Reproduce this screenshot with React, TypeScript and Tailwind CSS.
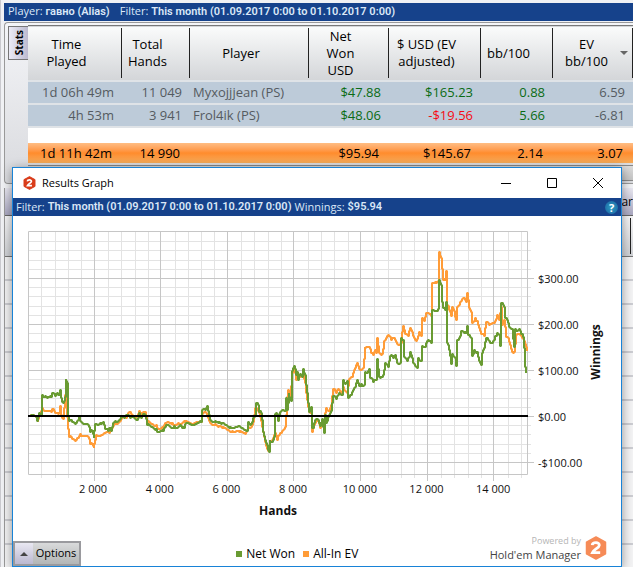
import React from "react";

type Point = [number, number];

const netWon: Point[] = [
  [28, 416], [36, 417], [37, 421], [39, 413], [41, 415], [42, 395], [45, 396], [47, 398], [51, 397], [52, 393], [55, 396],
  [57, 393], [59, 395], [60, 390], [61, 398], [63, 403], [65, 397], [65.5, 379], [67, 383], [68, 416], [69, 421], [72, 422],
  [75, 424], [77, 421], [79, 417], [81, 422], [85, 424], [88, 425], [90, 432], [92, 431], [93.5, 438], [95, 424], [100, 423],
  [103, 422], [105, 429], [108, 431], [110, 428], [111, 431], [112.5, 423], [115, 421], [119, 420], [121, 416], [124, 418],
  [126, 415], [130, 418], [133, 416], [137, 420], [139, 413], [141, 418], [143, 414], [145, 415], [147, 425], [152, 427],
  [156, 429], [157.5, 432], [163, 431], [165, 427], [168, 425], [172, 428], [174, 426], [177, 428], [180, 425], [182, 428],
  [184, 428], [186, 423], [190, 424], [197, 423], [201, 422], [202, 410], [205, 410], [207, 406], [208, 411], [209, 415],
  [210, 420], [215, 421], [218, 423], [221, 424], [225, 425], [230, 427], [236, 427], [241, 428], [244, 430], [247, 431],
  [248, 422], [251, 424], [253, 418], [255, 415], [256, 403], [258, 405], [259, 412], [261, 413], [262.5, 428], [265, 440],
  [267, 445], [268.5, 452], [269.5, 440], [272, 442], [274, 437], [274.5, 415], [277, 414], [278, 421], [280, 412],
  [283, 410], [285, 411], [286, 398], [287, 410], [288.5, 393], [291, 401], [292, 371], [294, 366], [296, 375], [297, 372],
  [298, 380], [300, 374], [302, 377], [303, 369], [305, 375], [306, 385], [307, 393], [308, 403], [309, 412], [311, 407],
  [312, 428], [313, 428], [315, 420], [318, 420], [320, 426], [322, 419], [324, 433], [325, 415], [326, 423], [328, 417],
  [331, 411], [333, 396], [336, 399], [339, 393], [342, 395], [343, 380], [345, 384], [347, 381], [348, 398], [351, 395],
  [355, 387], [357, 380], [359, 386], [361, 384], [364, 385], [365, 372], [367, 373], [369, 369], [370, 378], [373, 382],
  [376, 380], [377, 359], [379, 377], [383, 375], [385, 363], [388, 367], [390, 356], [393, 358], [395, 355], [397, 363],
  [400, 363], [401, 338], [403, 340], [404, 357], [407, 361], [409, 357], [410, 352], [413, 363], [417, 368], [418, 358],
  [421, 361], [422, 346], [425, 347], [427, 341], [431, 343], [432, 310], [435, 311], [438, 309], [439, 280], [441, 285],
  [442, 302], [443, 308], [445, 310], [446, 302], [447, 343], [449, 350], [451, 364], [452, 354], [455, 358], [456, 366],
  [457, 340], [460, 336], [461, 331], [464, 333], [466, 333], [467, 326], [468, 335], [471, 338], [472, 356], [474, 350],
  [477, 352], [479, 361], [481, 365], [482, 353], [484, 348], [486, 338], [490, 343], [493, 341], [495, 336], [497, 333],
  [499, 335], [500, 346], [501, 303], [504, 307], [505, 318], [507, 320], [509, 327], [512, 329], [514, 347], [515, 329],
  [517, 331], [519, 329], [521, 334], [523, 337], [524.5, 362], [526, 373],
];

const allInEv: Point[] = [
  [28, 416], [36, 417], [37.5, 422], [39, 415], [42, 408], [46, 411], [51, 412], [52, 409], [55, 413], [59, 413], [60, 406],
  [61, 415], [63, 419], [64.5, 395], [66, 395], [67, 417], [68, 429], [69, 437], [72, 439], [75, 441], [77, 438], [80, 434],
  [83, 436], [88, 437], [90, 444], [92, 444], [93.5, 448], [95, 440], [96, 435], [101, 435], [105, 433], [109, 433],
  [112, 428], [114, 423], [119, 422], [122, 417], [126, 418], [129, 412], [132, 415], [136, 417], [139, 411], [141, 414],
  [145, 412], [147, 422], [152, 424], [156, 425], [158, 429], [163, 428], [166, 423], [172, 423], [175, 425], [178, 423],
  [180, 425], [185, 422], [190, 423], [196, 422], [201, 422], [202, 414], [206, 413], [208, 418], [210, 423], [215, 424],
  [218, 427], [222, 428], [226, 429], [232, 431], [239, 432], [245, 434], [248, 427], [251, 427], [253, 422], [255, 408],
  [257, 410], [260, 417], [262, 427], [265, 442], [268, 451], [270, 442], [273, 438], [275, 433], [277, 440], [279, 435],
  [281, 433], [283, 430], [285, 427], [286, 415], [287, 397], [288, 390], [290, 398], [292, 373], [294, 368], [296, 380],
  [300, 377], [303, 373], [305, 383], [307, 400], [309, 412], [311, 413], [312, 432], [315, 423], [318, 421], [320, 428],
  [323, 422], [324.5, 415], [326, 408], [329, 411], [331, 405], [333, 389], [336, 393], [338, 389], [341, 393], [343, 387],
  [347, 393], [349, 379], [352, 377], [355, 368], [357, 363], [359, 369], [363, 368], [364.5, 347], [369, 347], [371, 353],
  [373, 355], [375, 350], [376, 353], [377, 338], [379, 353], [382, 354], [384, 341], [388, 335], [391, 340], [394, 338],
  [397, 344], [401, 343], [402, 332], [403, 326], [405, 334], [408, 336], [410, 328], [413, 336], [416, 341], [419, 332],
  [421, 336], [422, 318], [424, 321], [426, 313], [431, 316], [432, 283], [435, 282], [438, 281], [439, 252], [441, 258],
  [443, 280], [445, 280], [446, 271], [447, 305], [449, 310], [451, 316], [452, 307], [454, 311], [456, 320], [457, 307],
  [460, 302], [463, 298], [466, 302], [467, 293], [469, 308], [471, 312], [472, 323], [475, 318], [477, 321], [479, 328],
  [481, 334], [484, 336], [486, 322], [489, 325], [492, 323], [495, 321], [497, 315], [499, 320], [501, 307], [502, 325],
  [504, 320], [505.5, 337], [508, 338], [510, 345], [512, 352], [514, 352], [515.5, 334], [519, 334], [522, 338],
  [525, 344], [526.5, 351],
];

function tracePath(points: Point[]) {
  let d = `M${points[0][0]} ${points[0][1]}`;
  for (let i = 1; i < points.length; i++) {
    const [x0, y0] = points[i - 1];
    const [x1, y1] = points[i];
    const n = Math.max(1, Math.round(x1 - x0));
    for (let k = 1; k <= n; k++) {
      const swing = k < n ? Math.sin((x0 + k) * 12.9) * 1.2 : 0;
      const x = x0 + ((x1 - x0) * k) / n;
      const y = y0 + ((y1 - y0) * k) / n + swing;
      d += `H${Math.round(x)}V${Math.round(y)}`;
    }
  }
  return d;
}

const winningsTicks: [string, number][] = [
  ["$300.00", 278.5],
  ["$200.00", 324.5],
  ["$100.00", 370.5],
  ["$0.00", 416.5],
  ["-$100.00", 462.5],
];
const handsTicks = ["2 000", "4 000", "6 000", "8 000", "10 000", "12 000", "14 000"];
const minorX = Array.from({ length: 37 }, (_, i) => i + 1).filter((i) => i % 5 !== 0);
const minorY = Array.from({ length: 25 }, (_, i) => i - 4).filter((i) => i % 5 !== 0 && i <= 20);

function Chart() {
  return (
    <svg viewBox="0 0 608 310" className="block w-full" role="img" aria-label="Winnings by hands played">
      <g transform="translate(-13 -216)" fontSize="12" fill="#111">
        <g stroke="#e3e3e3" fill="none">
          {minorX.map((i) => {
            const x = Math.round(28 + i * 13.32) + 0.5;
            return <path key={i} d={`M${x} 231V478`} />;
          })}
          {minorY.map((i) => {
            const y = Math.round(278 + i * 9.2) + 0.5;
            return <path key={i} d={`M28 ${y}H531`} />;
          })}
        </g>
        <g stroke="#c6c6c6" fill="none">
          {handsTicks.map((label, i) => {
            const x = Math.round(28 + (i + 1) * 66.6) - 0.5;
            return <path key={label} d={`M${x} 231V481`} />;
          })}
          {winningsTicks.map(([label, y]) => (
            <path key={label} d={`M28 ${y}H534`} />
          ))}
          <path d="M28.5 231.5H527.5V474.5H28.5Z" />
        </g>
        <path d={tracePath(allInEv)} fill="none" stroke="#ff9c38" strokeWidth="2" strokeLinejoin="bevel" />
        <path d={tracePath(netWon)} fill="none" stroke="#699b32" strokeWidth="2" strokeLinejoin="bevel" />
        <path d="M28 416H528" stroke="#000" strokeWidth="2" />
        {winningsTicks.map(([label, y]) => (
          <text key={label} x="538" y={y + 4.5} fontSize="11">{label}</text>
        ))}
        {handsTicks.map((label, i) => (
          <text key={label} x={93 + i * 66.7} y="493" textAnchor="middle" fontSize="11">{label}</text>
        ))}
        <text x="278" y="515" textAnchor="middle" fontWeight="700">Hands</text>
        <text transform="translate(600 352) rotate(-90)" textAnchor="middle" fontWeight="700">Winnings</text>
      </g>
    </svg>
  );
}

function Logo({ className, color }: { className: string; color: string }) {
  return (
    <svg viewBox="0 0 22 24" className={className} aria-hidden="true">
      <path d="M11 1 20.500 6.200V17.800L11 23 1.500 17.800V6.200Z" fill={color} stroke={color} strokeWidth="1.500" strokeLinejoin="round" />
      <path d="M7.200 9.200C7.600 5.800 14.700 5.900 14.300 9.300C14 12 9.200 13 7.500 16.600H15.200" fill="none" stroke="#fff" strokeWidth="2.800" />
    </svg>
  );
}

const columns = [
  { name: "Time Played", width: "w-14" },
  { name: "Total Hands", width: "w-10" },
  { name: "Player", width: "w-14" },
  { name: "Net Won USD", width: "w-10" },
  { name: "$ USD (EV adjusted)", width: "w-[72px]" },
  { name: "bb/100", width: "w-14" },
];
const green = "text-[#0a6b14]";
const rows = [
  { time: "1d 06h 49m", hands: "11 049", player: "Myxojjjean (PS)", net: "$47.88", ev: "$165.23", evTone: green, bb: "0.88", evbb: "6.59" },
  { time: "4h 53m", hands: "3 941", player: "Frol4ik (PS)", net: "$48.06", ev: "-$19.56", evTone: "text-[#f50a14]", bb: "5.66", evbb: "-6.81" },
];

function StatsTable() {
  return (
    <table className="w-full table-fixed border-collapse text-right text-[13px] leading-[17px]">
      <colgroup>
        <col className="w-[94px]" />
        <col className="w-[68px]" />
        <col />
        <col className="w-20" />
        <col className="w-[92px]" />
        <col className="w-[72px]" />
        <col className="w-20" />
      </colgroup>
      <thead>
        <tr className="h-[55px] border-y border-[#777] bg-linear-to-b from-[#fafbfb] to-[#d3d5d8] text-center text-black">
          {columns.map(({ name, width }) => (
            <th key={name} scope="col" className="px-0 py-0.5 font-normal">
              <div className="flex h-[50px] items-center justify-center border-r border-[#222] pr-4">
                <span className={width}>{name}</span>
              </div>
            </th>
          ))}
          <th scope="col" className="px-0 py-0.5 font-normal">
            <button className="flex h-[50px] w-full items-center border-r border-[#222]">
              <span className="flex-1 px-3">EV bb/100</span>
              <span className="mr-2 border-x-4 border-t-4 border-x-transparent border-t-[#666]" />
            </button>
          </th>
        </tr>
      </thead>
      <tbody className="text-[#555b61]">
        {rows.map((r) => (
          <tr key={r.player} className="h-[23px] border-y-2 border-[#dfe3e7] bg-[#bdcbd9]">
            <td className="pr-2">{r.time}</td>
            <td className="pr-2">{r.hands}</td>
            <td className="pl-[3px] text-left">{r.player}</td>
            <td className={`pr-2 ${green}`}>{r.net}</td>
            <td className={`pr-2 ${r.evTone}`}>{r.ev}</td>
            <td className={`pr-2 ${green}`}>{r.bb}</td>
            <td className="pr-2">{r.evbb}</td>
          </tr>
        ))}
        <tr className="h-4 bg-white"><td colSpan={7} /></tr>
      </tbody>
      <tfoot>
        <tr className="h-5 bg-linear-to-b from-[#ffbd83] via-[#ff8c2c] to-[#f5ab59] text-black">
          <td className="pr-2.5">1d 11h 42m</td>
          <td className="pr-2.5">14 990</td>
          <td />
          <td className="pr-2.5">$95.94</td>
          <td className="pr-2.5">$145.67</td>
          <td className="pr-2.5">2.14</td>
          <td className="pr-2.5">3.07</td>
        </tr>
      </tfoot>
    </table>
  );
}

function FilterValue({ children }: { children: React.ReactNode }) {
  return <b className="font-[Roboto] text-[11px] font-semibold">{children}</b>;
}

function ResultsWindow() {
  return (
    <section className="absolute top-[167px] right-[11px] left-[11px] border border-[#1883d7] bg-white text-xs text-black shadow-[0_2px_10px_rgba(0,0,0,0.4)]">
      <header className="flex h-[30px] items-center pl-2.5">
        <Logo className="mr-1.5 h-3.5 w-[13px]" color="#d93c1a" />
        <h2 className="flex-1 text-[11px]">Results Graph</h2>
        <button aria-label="Minimize" className="flex h-full w-[46px] items-center justify-center">
          <svg viewBox="0 0 10 10" className="size-2.5" fill="none" stroke="#000"><path d="M0 5.500H10" /></svg>
        </button>
        <button aria-label="Maximize" className="flex h-full w-[46px] items-center justify-center">
          <svg viewBox="0 0 10 10" className="size-2.5" fill="none" stroke="#000"><path d="M.5.500H9.500V9.500H.5Z" /></svg>
        </button>
        <button aria-label="Close" className="flex h-full w-[46px] items-center justify-center">
          <svg viewBox="0 0 10 10" className="size-2.5" fill="none" stroke="#000"><path d="M0 0 10 10M10 0 0 10" /></svg>
        </button>
      </header>
      <div className="flex h-[18px] items-center gap-[3px] bg-[#16428b] pr-[3px] pl-[3px] text-[11px] whitespace-pre text-[#dbe8f7]">
        <span>Filter:</span>
        <FilterValue>This month (01.09.2017 0:00 to 01.10.2017 0:00)</FilterValue>
        <span>Winnings:</span>
        <FilterValue>$95.94</FilterValue>
        <button aria-label="Help" className="ml-auto size-[13px] rounded-full bg-radial from-[#2f9fc4] to-[#1b5f9e] text-center text-[11px] leading-[13px] font-bold text-white">?</button>
      </div>
      <Chart />
      <footer className="flex h-10 items-end">
        <button className="flex h-[25px] w-[68px] items-center border-2 border-[#9a9a9e] bg-linear-to-b from-[#d9dadb] to-[#b3b6b6] text-[11px]">
          <span className="flex h-full w-[18px] items-center justify-center bg-linear-to-b from-[#e9e8f2] to-[#bbb8d0]">
            <span className="border-x-4 border-b-4 border-x-transparent border-b-[#444]" />
          </span>
          <span className="flex-1">Options</span>
        </button>
        <ul className="mb-1 flex flex-1 items-center justify-center gap-2 pr-2 pl-8">
          <li className="flex items-center gap-1"><i className="size-1.5 bg-[#699b32]" />Net Won</li>
          <li className="flex items-center gap-1"><i className="size-1.5 bg-[#ff9c38]" />All-In EV</li>
        </ul>
        <div className="mr-3.5 mb-1 flex items-center gap-1">
          <div className="text-right text-[#444]">
            <small className="block text-[9px] leading-[13px] text-[#b5b5b5]">Powered by</small>
            <span className="block text-[11px] leading-[15px]">Hold'em Manager</span>
          </div>
          <Logo className="h-6 w-[22px]" color="#f68b57" />
        </div>
      </footer>
    </section>
  );
}

export default function App() {
  return (
    <main className="relative flex h-screen flex-col overflow-hidden border-l border-[#c9c9ce] bg-[#f0f1f4] pt-[3px] pl-[3px] font-['Open_Sans','Noto_Sans',sans-serif]">
      <div className="flex h-[18px] shrink-0 items-center gap-2.5 bg-[#16428b] pl-1 text-[11px] whitespace-pre text-[#dbe8f7]">
        <span>Player: <FilterValue>гавно (Alias)</FilterValue></span>
        <span>Filter: <FilterValue>This month (01.09.2017 0:00 to 01.10.2017 0:00)</FilterValue></span>
      </div>
      <section className="mt-px flex h-[162px] shrink-0 rounded-l border border-r-0 border-[#999] bg-linear-to-b from-[#f4f5f8] to-[#d9dade] pt-0.5">
        <button className="mt-px ml-[3px] flex h-[34px] w-5 shrink-0 items-center justify-center border border-r-0 border-[#777] bg-linear-to-r from-[#ecebf5] to-[#bdbbd0] text-[10px] leading-3 font-bold">
          <span className="rotate-180 [writing-mode:vertical-rl]">Stats</span>
        </button>
        <div className="min-w-0 flex-1">
          <StatsTable />
          <div className="mt-0.5 h-4 border-y border-[#888] bg-linear-to-b from-[#dcdcdc] to-[#c4c4c4]" />
        </div>
      </section>
      <section className="mt-1 flex min-h-0 flex-1 flex-col border-l border-[#999]">
        <div className="flex h-7 shrink-0 items-center justify-end border-b border-[#666] bg-linear-to-b from-[#e8e7f0] to-[#a9a7c0] pl-[3px] text-xs">
          <span>ar</span>
        </div>
        <div className="h-[41px] shrink-0 border-b border-[#777] bg-linear-to-b from-[#f6f6f7] to-[#ced0d4] py-0.5 pr-0.5">
          <div className="h-full border-r border-[#222]" />
        </div>
        {Array.from({ length: 13 }, (_, i) => (
          <div key={i} className="h-6 shrink-0 border-b-2 border-[#cccdd2] bg-[#f3f3f4]" />
        ))}
      </section>
      <ResultsWindow />
    </main>
  );
}
